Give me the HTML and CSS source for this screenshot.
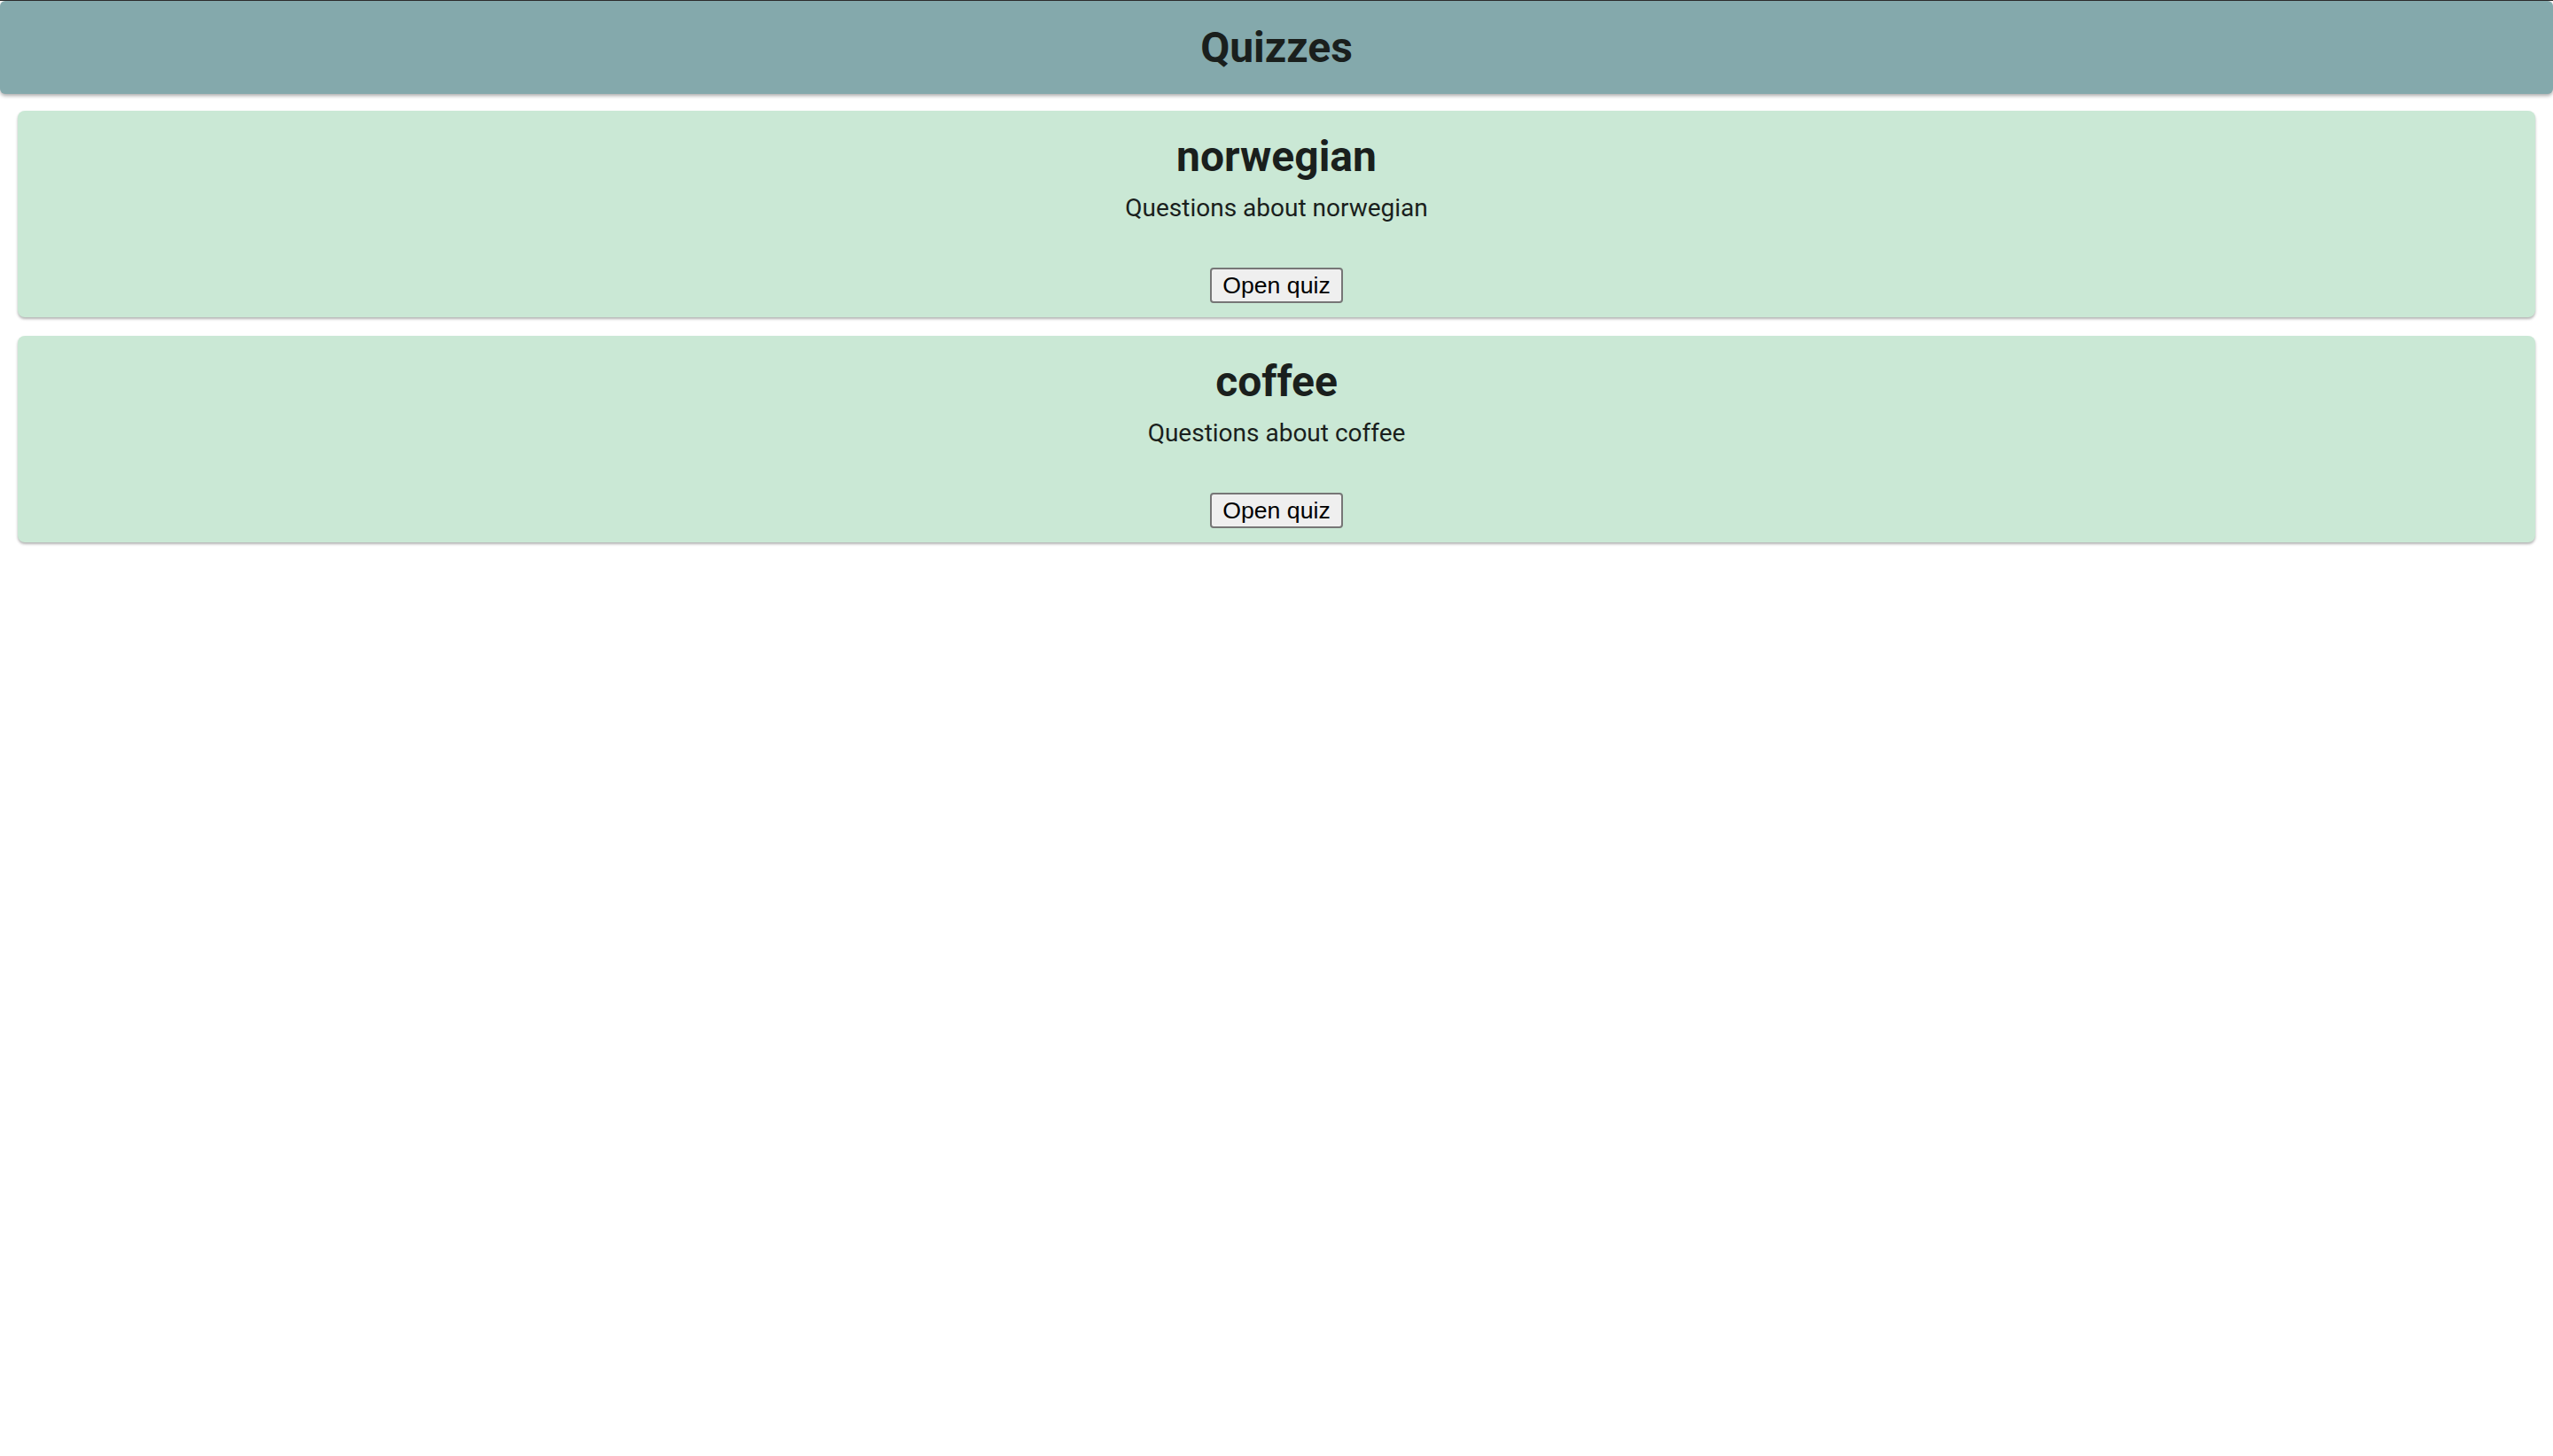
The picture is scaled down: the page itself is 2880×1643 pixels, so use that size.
FILE: index.html
```html
<!DOCTYPE html>
<html lang="en">
<head>
<meta charset="utf-8">
<title>Quizzes</title>
<link rel="stylesheet" href="styles.css">
</head>
<body>
<header class="topbar">
  <h1 class="title">Quizzes</h1>
</header>
<main class="list">
  <section class="card">
    <h2 class="card-title">norwegian</h2>
    <p class="card-desc">Questions about norwegian</p>
    <button class="btn" type="button">Open quiz</button>
  </section>
  <section class="card">
    <h2 class="card-title">coffee</h2>
    <p class="card-desc">Questions about coffee</p>
    <button class="btn" type="button">Open quiz</button>
  </section>
</main>
</body>
</html>
```

FILE: styles.css
```css
html, body {
  margin: 0;
  padding: 0;
  background: #ffffff;
}
body {
  border-top: 1px solid #2b2b2b;
  font-family: Roboto, "Liberation Sans", sans-serif;
  color: #1a1f1d;
}
.topbar {
  height: 105px;
  background: #84a9ac;
  border-radius: 6px;
  box-shadow: 0 2px 4px rgba(0, 0, 0, 0.35);
  display: flex;
  align-items: center;
  justify-content: center;
}
.title {
  margin: 0;
  font-size: 48px;
  font-weight: 700;
  line-height: 56px;
}
.list {
  display: flex;
  flex-direction: column;
  gap: 21px;
  padding: 19px 20px;
}
.card {
  height: 233px;
  box-sizing: border-box;
  background: #cae8d5;
  border-radius: 8px;
  box-shadow: 0 2px 3px rgba(0, 0, 0, 0.3);
  padding: 24px 0 16px;
  display: flex;
  flex-direction: column;
  align-items: center;
}
.card-title {
  margin: 0;
  font-size: 48px;
  font-weight: 700;
  line-height: 56px;
}
.card-desc {
  margin: 13px 0 0;
  font-size: 28px;
  line-height: 33px;
}
.btn {
  margin-top: 51px;
  font-family: "Liberation Sans", Arial, sans-serif;
  font-size: 26.67px;
  line-height: 32px;
  color: #000;
  background: #efefef;
  border: 2px solid #767676;
  border-radius: 4px;
  padding: 2px 12px;
}
```
